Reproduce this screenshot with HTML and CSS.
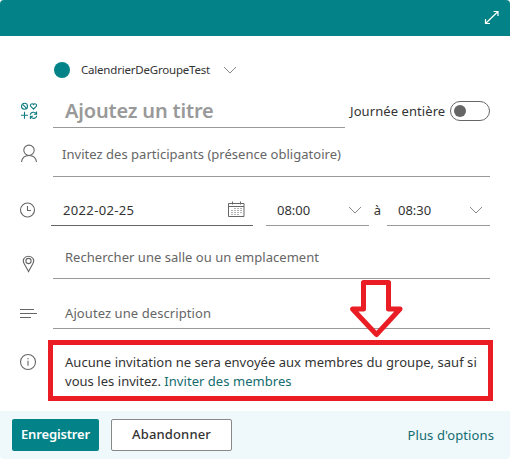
FILE: index.html
```html
<!DOCTYPE html>
<html lang="fr">
<head>
<meta charset="utf-8">
<title>Nouvel événement</title>
<link rel="stylesheet" href="styles.css">
</head>
<body>
<main class="dialog">
  <header class="topbar">
    <svg class="expand" width="16" height="16" viewBox="0 0 16 16"><path d="M1.500 13.500 14 1.500M9.500 1.500H14V6M1.500 9v4.500H6"/></svg>
  </header>

  <div class="calendar">
    <span class="dot"></span>
    <span class="calendar-name">CalendrierDeGroupeTest</span>
    <svg class="chevron" width="14" height="8" viewBox="0 0 14 8"><path d="M1 1l6 6 6-6"/></svg>
  </div>

  <div class="row row-title">
    <div class="icon">
      <svg class="teal" width="18" height="18" viewBox="0 0 18 18"><circle cx="4.500" cy="4.300" r="3"/><path d="M2.400 2.200l4.200 4.200M13.500 7.200 10.800 4.400C9.500 2.800 12 .4 13.500 2.600 15 .4 17.500 2.800 16.200 4.400zM4.500 9.800v7M1 13.300h7M10.300 12.800c.3-3 4.800-3.500 6-.8M16.600 9.600v2.700h-2.700M16.700 13.800c-.3 3-4.800 3.500-6 .8M10.400 17v-2.700h2.700"/></svg>
    </div>
    <div class="field field-title"><span class="title-text">Ajoutez un titre</span></div>
    <div class="allday"><span class="allday-label">Journée entière</span><span class="switch"><span class="knob"></span></span></div>
  </div>

  <div class="row row-people">
    <div class="icon"><svg width="18" height="19" viewBox="0 0 18 19"><circle cx="9" cy="6.300" r="5.200"/><path d="M1.500 18c.5-4 3-6.500 7.500-6.500s7 2.500 7.500 6.500"/></svg></div>
    <div class="field"><span class="hint people-text">Invitez des participants (présence obligatoire)</span></div>
  </div>

  <div class="row row-date">
    <div class="icon"><svg width="18" height="18" viewBox="0 0 18 18"><circle cx="8.500" cy="9" r="7"/><path d="M8.500 5v4.500h3.500"/></svg></div>
    <div class="field field-date"><span class="date-text">2022-02-25</span>
      <svg width="17" height="17" viewBox="0 0 17 17"><path d="M.5 2.500h15.500v13H.5zM.5 5.500h15.500M4.500.5v3M12.500.5v3"/><path class="dots" d="M6.500 7.500h7M3.500 9.500h10M3.500 11.500h10M3.500 13.500h7"/></svg>
    </div>
    <div class="field field-time"><span class="time-text">08:00</span><svg class="chevron" width="14" height="8" viewBox="0 0 14 8"><path d="M1 1l6 6 6-6"/></svg></div>
    <span class="to">à</span>
    <div class="field field-time"><span class="time-text">08:30</span><svg class="chevron" width="14" height="8" viewBox="0 0 14 8"><path d="M1 1l6 6 6-6"/></svg></div>
  </div>

  <div class="row row-place">
    <div class="icon"><svg width="18" height="18" viewBox="0 0 18 18"><path d="M9.500 16.500 5.200 8.800C2.800 4.800 5.500 1.200 9.500 1.200s6.700 3.600 4.300 7.600z"/><circle cx="9.500" cy="6" r="2.600"/></svg></div>
    <div class="field"><span class="hint place-text">Rechercher une salle ou un emplacement</span></div>
  </div>

  <div class="row row-desc">
    <div class="icon"><svg class="lines" width="18" height="11" viewBox="0 0 18 11"><path d="M1 1.500h14M1 5.500h17M1 9.500h11"/></svg></div>
    <div class="field"><span class="hint desc-text">Ajoutez une description</span></div>
  </div>

  <div class="row-info">
    <div class="icon"><svg width="18" height="18" viewBox="0 0 18 18"><circle cx="9" cy="9" r="7.500"/><path d="M9 7.800v5M9 5v1.300"/></svg></div>
    <div class="notice">
      <div class="notice-one">Aucune invitation ne sera envoyée aux membres du groupe, sauf si</div>
      <div class="notice-two">vous les invitez. <a class="link">Inviter des membres</a></div>
    </div>
    <svg class="arrow" width="56" height="62" viewBox="0 0 56 62"><path d="M15.500 4.500h25v26.500h11.500L28.500 56.500 4.500 31h11z"/></svg>
  </div>

  <footer class="footer">
    <button class="btn primary">Enregistrer</button>
    <button class="btn secondary">Abandonner</button>
    <a class="link more">Plus d'options</a>
  </footer>
</main>
</body>
</html>
```
FILE: styles.css
```css
* { box-sizing: border-box; }
body { margin: 0; background: #fff; font: 13px/18px "Noto Sans", "Open Sans", sans-serif; color: #333; }
.dialog { width: 510px; height: 459px; display: flex; flex-direction: column; border-radius: 4px; overflow: hidden; white-space: nowrap; }
svg { display: block; flex: none; fill: none; stroke: #666; stroke-width: 1.1; }
.topbar { height: 36px; flex: none; background: #038387; display: flex; justify-content: flex-end; padding: 10px 10px 0 0; }
.expand { stroke: #fff; stroke-width: 1.2; }
.calendar { height: 56px; flex: none; display: flex; align-items: center; padding: 12px 0 0 54px; }
.dot { width: 16px; height: 16px; border-radius: 50%; background: #038387; margin-right: 11px; }
.calendar-name { font-size: 11.5px; letter-spacing: -.2px; margin-right: 13px; }
.chevron { stroke: #888; stroke-width: 1; }
.row { display: flex; flex: none; padding-right: 20px; }
.icon { width: 53px; flex: none; padding-left: 20px; display: flex; }
.teal { stroke: #107c80; }
.field { flex: 1; border-bottom: 1px solid #999; padding-left: 12px; }
.hint { color: #666; }
.people-text { letter-spacing: .03px; }
.place-text { letter-spacing: .03px; }
.desc-text { letter-spacing: .08px; }
.row-title { height: 36px; }
.row-title .icon { padding-top: 10px; }
.field-title { flex: 0 0 292px; line-height: 38px; }
.title-text { font-size: 20px; font-weight: 600; letter-spacing: -.17px; color: #999; }
.allday { display: flex; flex: 1; align-items: center; justify-content: space-between; padding: 1px 0 0 5px; }
.allday-label { letter-spacing: .08px; }
.switch { width: 40px; height: 20px; border: 1px solid #666; border-radius: 10px; padding: 3px; }
.knob { display: block; width: 12px; height: 12px; border-radius: 50%; background: #666; }
.row-people { height: 49px; }
.row-people .icon { padding-top: 16px; }
.row-people .field { padding: 17px 0 0 9px; }
.row-date { height: 49px; }
.row-date .icon { width: 51px; padding: 24px 0 0 19px; }
.date-text { letter-spacing: .35px; }
.field-date { flex: 0 0 202px; border-color: #666; display: flex; justify-content: space-between; padding: 24px 8px 0 12px; }
.field-date svg { stroke-width: 1; }
.dots { stroke-dasharray: 1 2; }
.field-time { flex: 0 0 103px; display: flex; justify-content: space-between; padding: 24px 7px 0 11px; }
.field-date + .field-time { margin-left: 13px; }
.field-time svg { margin-top: 5px; }
.to { width: 17px; text-align: center; padding-top: 24px; margin-right: auto; }
.row-place { height: 53px; }
.row-place .icon { padding-top: 29px; padding-left: 19px; }
.row-place .field { padding-top: 22px; }
.row-desc { height: 50px; }
.row-desc .icon { padding-top: 29px; padding-left: 19px; }
.row-desc .field { padding-top: 25px; }
.lines { stroke-width: 1.2; }
.row-info { position: relative; display: flex; height: 61px; margin: 11px 17px 10px 0; flex: none; }
.row-info .icon { width: 48px; padding: 13px 0 0 19px; }
.notice { flex: 1; border: 5px solid #ea1c24; padding: 8px 0 0 12px; line-height: 19px; letter-spacing: .04px; }
.link { color: #136c70; }
.arrow { position: absolute; left: 348px; top: -62px; stroke: #ea1c24; stroke-width: 5; fill: none; stroke-linejoin: round; }
.footer { height: 48px; flex: none; background: #eff8fa; display: flex; align-items: center; padding: 0 16px 0 12px; }
.btn { height: 32px; padding: 0 0 2px; border-radius: 2px; font: inherit; font-weight: 600; }
.primary { width: 87px; border: 0; background: #038387; color: #fff; letter-spacing: -.15px; }
.secondary { width: 121px; margin-left: 12px; border: 1px solid #888; background: #fff; color: #333; font-weight: 500; letter-spacing: .15px; }
.more { margin-left: auto; letter-spacing: .1px; }
```
